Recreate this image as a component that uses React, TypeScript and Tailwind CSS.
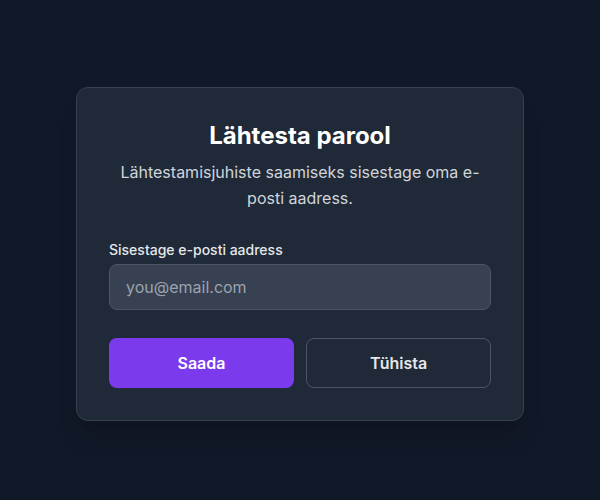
export default function App() {
  return (
    <div className="min-h-screen flex items-center justify-center bg-[#111827] pt-2 font-['Inter',sans-serif]">
      <div className="w-full max-w-md rounded-xl border border-[#374151] bg-[#1f2937] p-8 shadow-xl">
        <h1 className="text-center text-2xl font-bold text-white">Lähtesta parool</h1>
        <p className="mt-[7px] text-center text-base leading-[26px] text-[#d1d5db]">
          Lähtestamisjuhiste saamiseks sisestage oma e-posti aadress.
        </p>

        <div className="mt-[29px]">
          <label htmlFor="email" className="block text-sm font-medium text-[#e5e7eb]">
            Sisestage e-posti aadress
          </label>
          <input
            id="email"
            type="email"
            placeholder="you@email.com"
            className="mt-1 w-full rounded-lg border border-[#4b5563] bg-[#374151] px-4 py-2.5 text-base leading-6 text-white placeholder:text-[#9ca3af] outline-none"
          />
        </div>

        <div className="mt-7 flex gap-3">
          <button className="flex-1 rounded-lg border border-transparent bg-[#7c3aed] py-3 text-base font-semibold leading-6 text-white">
            Saada
          </button>
          <button className="flex-1 rounded-lg border border-[#4b5563] bg-transparent py-3 text-base font-semibold leading-6 text-[#e5e7eb]">
            Tühista
          </button>
        </div>
      </div>
    </div>
  );
}
